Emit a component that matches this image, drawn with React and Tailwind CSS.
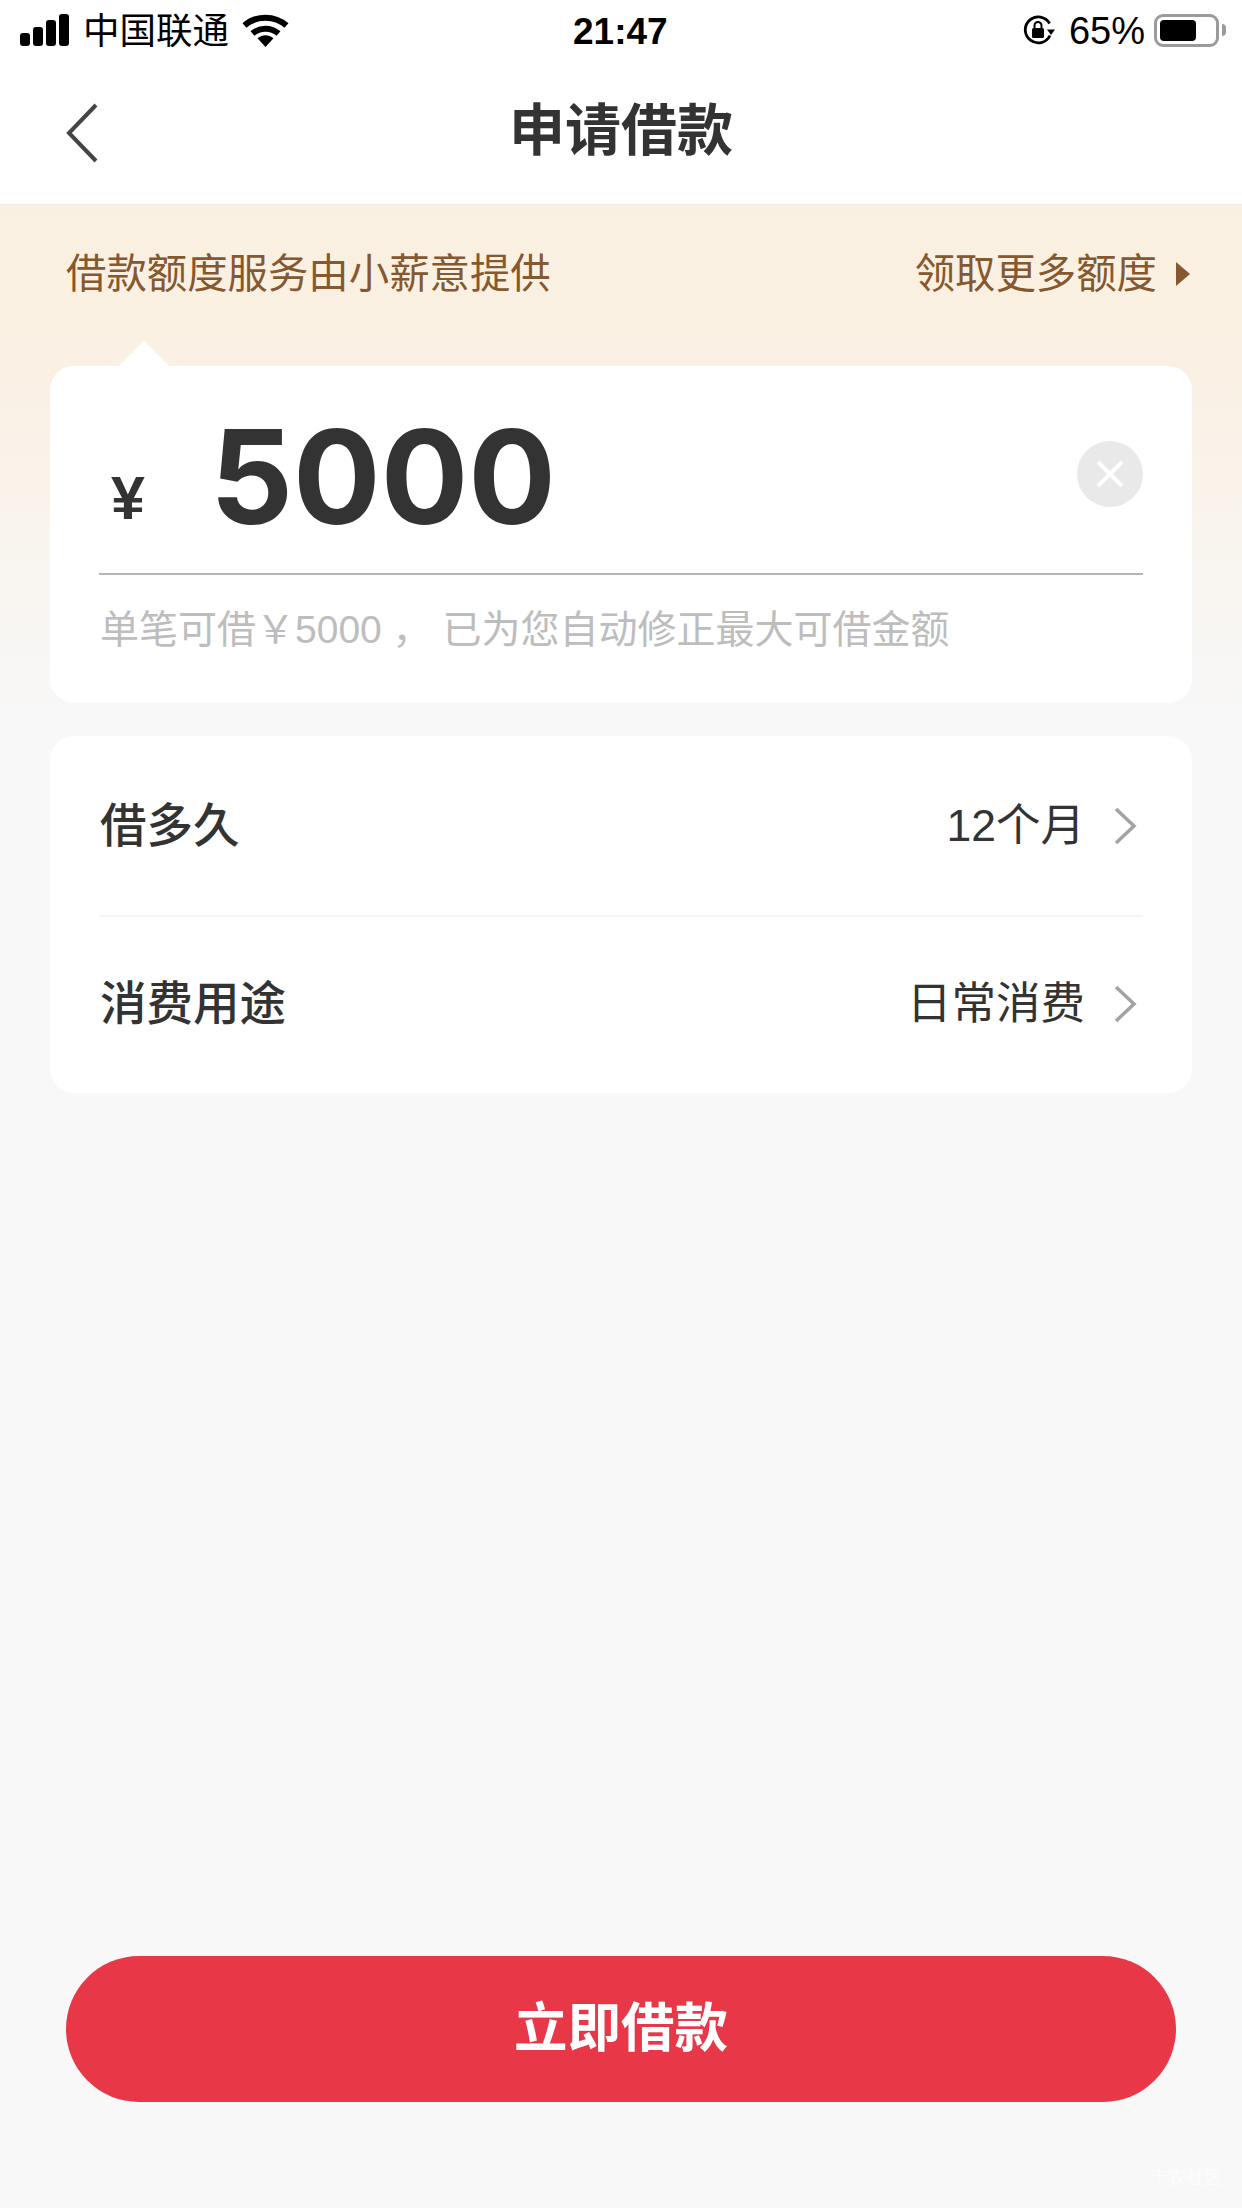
const Signal = () => (
  <div className="flex items-end gap-[3px] h-[32px]">
    <div className="w-[10px] h-[13px] rounded-[3px] bg-black" />
    <div className="w-[10px] h-[19px] rounded-[3px] bg-black" />
    <div className="w-[10px] h-[26px] rounded-[3px] bg-black" />
    <div className="w-[10px] h-[32px] rounded-[3px] bg-black" />
  </div>
);

const Wifi = () => (
  <svg width="47" height="33" viewBox="0 0 47 33" fill="none">
    <path d="M2.5 11.5C14.5 1 32.5 1 44.5 11.5" stroke="black" strokeWidth="6" strokeLinecap="butt" />
    <path d="M10.5 19.5C18 13 29 13 36.5 19.5" stroke="black" strokeWidth="6" strokeLinecap="butt" />
    <path d="M15.5 24.2C20.5 20.3 26.5 20.3 31.5 24.2L23.5 33Z" fill="black" />
  </svg>
);

const RotationLock = () => (
  <svg width="32" height="30" viewBox="0 0 32 30" fill="none">
    <path d="M27 20.5A13 13 0 1 1 26.6 8.5" stroke="black" strokeWidth="2.8" />
    <path d="M24 14.5H32L28 20Z" fill="black" />
    <rect x="9" y="13" width="12" height="10" rx="1.5" fill="black" />
    <path d="M11.5 13V10.5a3.5 3.5 0 0 1 7 0V13" stroke="black" strokeWidth="2" />
  </svg>
);

const Battery = () => (
  <div className="flex items-center gap-[3px]">
    <div className="w-[65px] h-[33px] rounded-[9px] border-[3px] border-[#9b9b9b] p-[3px]">
      <div className="w-[36px] h-full rounded-[4px] bg-black" />
    </div>
    <div className="w-[4px] h-[12px] rounded-r-full bg-[#9b9b9b]" />
  </div>
);

const Chevron = () => (
  <svg width="24" height="38" viewBox="0 0 24 38" fill="none">
    <path d="M3 2L21 19L3 36" stroke="#a3a3a3" strokeWidth="3.5" />
  </svg>
);

const rows = [
  { label: "借多久", value: "12个月" },
  { label: "消费用途", value: "日常消费" },
];

export default function App() {
  return (
    <div className="relative flex flex-col w-[1242px] h-[2208px] overflow-hidden bg-white text-[#333] font-['Liberation_Sans','Noto_Sans_CJK_SC',sans-serif]">
      {/* status bar */}
      <div className="relative h-[60px] shrink-0 flex items-center justify-between pl-[20px] pr-[16px] text-black">
        <div className="flex items-center">
          <Signal />
          <span className="ml-[14px] mt-[3px] text-[36.5px] leading-[40px]">中国联通</span>
          <span className="ml-[13px]"><Wifi /></span>
        </div>
        <span className="absolute left-[573px] top-[11px] text-[37px] leading-[42px] font-bold">21:47</span>
        <div className="flex items-center">
          <RotationLock />
          <span className="ml-[14px] mr-[9px] mt-[2px] text-[38px] leading-[40px]">65%</span>
          <Battery />
        </div>
      </div>

      {/* nav */}
      <div className="relative h-[145px] shrink-0 flex items-center justify-center border-b border-[#efeae4]">
        <svg className="absolute left-[65px] top-[42px]" width="34" height="62" viewBox="0 0 34 62" fill="none">
          <path d="M31 3L4 31L31 59" stroke="#444" strokeWidth="4" />
        </svg>
        <h1 className="text-[56px] leading-[64px] font-bold text-[#333] -mt-[2px]">申请借款</h1>
      </div>

      <div className="flex-1 flex flex-col px-[50px] bg-[linear-gradient(180deg,#faf0e2_0,#faf0e3_150px,#f8f8f8_510px)]">
        {/* banner */}
        <div className="h-[161px] shrink-0 flex items-start justify-between pl-[16px] pr-[2px] pt-[45px] text-[40.4px] leading-[48px] text-[#85582f]">
          <span>借款额度服务由小薪意提供</span>
          <div className="flex items-center">
            <span>领取更多额度</span>
            <div className="ml-[19px] w-0 h-0 border-y-[12px] border-y-transparent border-l-[14px] border-l-[#85582f]" />
          </div>
        </div>

        {/* amount card */}
        <div className="relative h-[337px] shrink-0 rounded-[24px] bg-white px-[49px]">
          <div className="absolute left-[68px] -top-[25px] w-0 h-0 border-x-[26px] border-x-transparent border-b-[26px] border-b-white" />
          <div className="relative h-[209px] flex items-center border-b-2 border-[#b4b4ba]">
            <span className="mt-[56px] ml-[12px] text-[61px] leading-[60px] font-bold text-[#333]">¥</span>
            <span className="ml-[65px] mt-[14px] text-[130px] leading-[136px] font-bold text-[#333] font-['Inter',sans-serif]">5000</span>
            <div className="ml-auto mt-[9px] w-[66px] h-[66px] rounded-full bg-[#e9e9e9] flex items-center justify-center">
              <svg width="28" height="28" viewBox="0 0 28 28" fill="none">
                <path d="M2 2L26 26M26 2L2 26" stroke="white" strokeWidth="4" />
              </svg>
            </div>
          </div>
          <p className="mt-[32px] text-[39px] leading-[46px] text-[#bdbdbd] pl-[1px] whitespace-nowrap">
            单笔可借￥5000 ， 已为您自动修正最大可借金额
          </p>
        </div>

        {/* options card */}
        <div className="mt-[33px] h-[357px] shrink-0 rounded-[24px] bg-white px-[49px]">
          {rows.map((row, index) => (
            <div
              key={row.label}
              className={`flex items-center justify-between ${
                index === 0 ? "h-[181px] border-b-2 border-[#f5f5f5]" : "h-[174px]"
              }`}
            >
              <span className="pl-[1px] text-[46.5px] leading-[54px] font-medium text-[#333]">{row.label}</span>
              <div className="flex items-center">
                <span className="text-[44.5px] leading-[54px] text-[#333]">{row.value}</span>
                <span className="ml-[28px] mr-[6px]"><Chevron /></span>
              </div>
            </div>
          ))}
        </div>

        {/* submit */}
        <button className="mt-auto mb-[106px] mx-[16px] h-[146px] shrink-0 rounded-full bg-[#e83847] text-white text-[53.5px] leading-[60px] font-bold">
          立即借款
        </button>
      </div>

      <span className="absolute left-[1150px] top-[2168px] text-[18px] leading-[20px] text-white/70">卡农社区</span>
    </div>
  );
}
